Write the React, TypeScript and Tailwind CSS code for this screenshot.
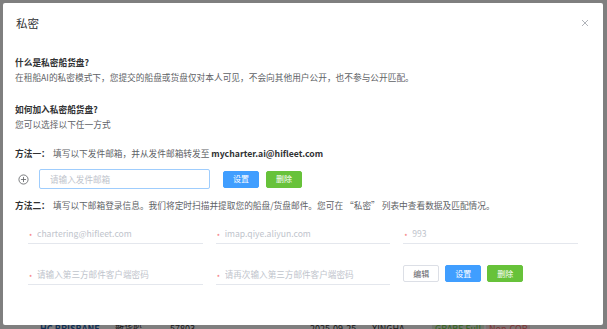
import React from "react"

const font = "font-['Noto_Sans_CJK_SC','Noto_Sans',sans-serif]"

function Btn({ kind, children }: { kind: "primary" | "success" | "plain"; children: React.ReactNode }) {
    const styles = {
        primary: "bg-[#409eff] border-[#409eff] text-white",
        success: "bg-[#67c23a] border-[#67c23a] text-white",
        plain: "bg-white border-[#dcdfe6] text-[#606266]",
    }
    return (
        <button className={`h-[17px] w-[36px] rounded-[2px] border text-[8px] leading-none flex items-center justify-center ${styles[kind]}`}>
            {children}
        </button>
    )
}

function Field({ placeholder }: { placeholder: string }) {
    return (
        <div className="h-[20px] border-b border-[#e4e7ed] flex items-center pl-[1px]">
            <span className="text-[#f56c6c] text-[7px] leading-none mt-[6px] w-[8px]">*</span>
            <input
                readOnly
                placeholder={placeholder}
                className={`flex-1 min-w-0 bg-transparent outline-none text-[8.6px] ${font} placeholder:text-[#c0c4cc]`}
            />
        </div>
    )
}

export default function App() {
    return (
        <div className={`relative w-[607px] h-[329px] overflow-hidden bg-white ${font}`}>
            {/* page behind the modal */}
            <div className="h-full flex flex-col justify-end">
                <div className="h-[12px] -mb-[6px] flex items-start text-[9px] leading-[10px] pt-[1px] text-[#333]">
                    <span className="ml-[40px] w-[75px] text-[#1f5fa8] font-semibold">HC BRISBANE</span>
                    <span className="w-[55px]">散货船</span>
                    <span className="w-[140px]">57803</span>
                    <span className="w-[62px]">2025-09-25</span>
                    <span className="w-[60px]">XINGHA</span>
                    <span className="px-[3px] bg-[#e1f3d8] text-[#67c23a]">GRABE Full</span>
                    <span className="ml-[2px] px-[3px] bg-[#fde2e2] text-[#f56c6c]">Non-COR</span>
                </div>
            </div>

            {/* overlay */}
            <div className="absolute inset-0 bg-black/50" />

            {/* dialog */}
            <div className="absolute left-[3px] top-[3px] w-[600px] h-[322px] bg-white rounded-[2px] flex flex-col">
                <div className="h-[52px] flex justify-between items-start pl-[13px] pr-[14px] pt-[13px]">
                    <span className="text-[11.5px] leading-[15px] text-[#303133]">私密</span>
                    <svg width="8" height="8" viewBox="0 0 8 8" className="mt-[3px]" stroke="#a8abb2" strokeWidth="0.9">
                        <line x1="1" y1="1" x2="7" y2="7" />
                        <line x1="7" y1="1" x2="1" y2="7" />
                    </svg>
                </div>

                <div className="pl-[12px] text-[8.7px] text-[#606266]">
                    <div className="leading-[15px] font-bold text-[#303133]">什么是私密船货盘?</div>
                    <div className="leading-[16px]">在租船AI的私密模式下，您提交的船盘或货盘仅对本人可见，不会向其他用户公开，也不参与公开匹配。</div>

                    <div className="mt-[16px] leading-[15px] font-bold text-[#303133]">如何加入私密船货盘?</div>
                    <div className="leading-[15px]">您可以选择以下任一方式</div>

                    <div className="mt-[14px] leading-[15px] flex">
                        <span className="font-bold text-[#303133] w-[38px]">方法一：</span>
                        <span>填写以下发件邮箱，并从发件邮箱转发至 <b className="text-[#303133]">mycharter.ai@hifleet.com</b></span>
                    </div>

                    <div className="mt-[8px] flex items-center">
                        <svg width="11" height="11" viewBox="0 0 12 12" fill="none" stroke="#606266" strokeWidth="0.9" className="ml-[3px]">
                            <circle cx="6" cy="6" r="5" />
                            <line x1="6" y1="3.2" x2="6" y2="8.8" />
                            <line x1="3.2" y1="6" x2="8.8" y2="6" />
                        </svg>
                        <div className="ml-[10px] w-[171px] h-[20px] rounded-[2px] border border-[#9fcdfd] flex items-center px-[10px]">
                            <input
                                readOnly
                                placeholder="请输入发件邮箱"
                                className={`w-full bg-transparent outline-none text-[8.6px] ${font} placeholder:text-[#c0c4cc]`}
                            />
                        </div>
                        <div className="ml-[13px] flex gap-[7px]">
                            <Btn kind="primary">设置</Btn>
                            <Btn kind="success">删除</Btn>
                        </div>
                    </div>

                    <div className="mt-[9px] leading-[15px] flex">
                        <span className="font-bold text-[#303133] w-[38px]">方法二：</span>
                        <span>填写以下邮箱登录信息。我们将定时扫描并提取您的船盘/货盘邮件。您可在 “私密” 列表中查看数据及匹配情况。</span>
                    </div>

                    <div className="ml-[13px] w-[550px] mt-[11px] grid grid-cols-3 gap-x-[13px] gap-y-[21px]">
                        <Field placeholder="chartering@hifleet.com" />
                        <Field placeholder="imap.qiye.aliyun.com" />
                        <Field placeholder="993" />
                        <Field placeholder="请输入第三方邮件客户端密码" />
                        <Field placeholder="请再次输入第三方邮件客户端密码" />
                        <div className="flex gap-[6px]">
                            <Btn kind="plain">编辑</Btn>
                            <Btn kind="primary">设置</Btn>
                            <Btn kind="success">删除</Btn>
                        </div>
                    </div>
                </div>
            </div>
        </div>
    )
}
